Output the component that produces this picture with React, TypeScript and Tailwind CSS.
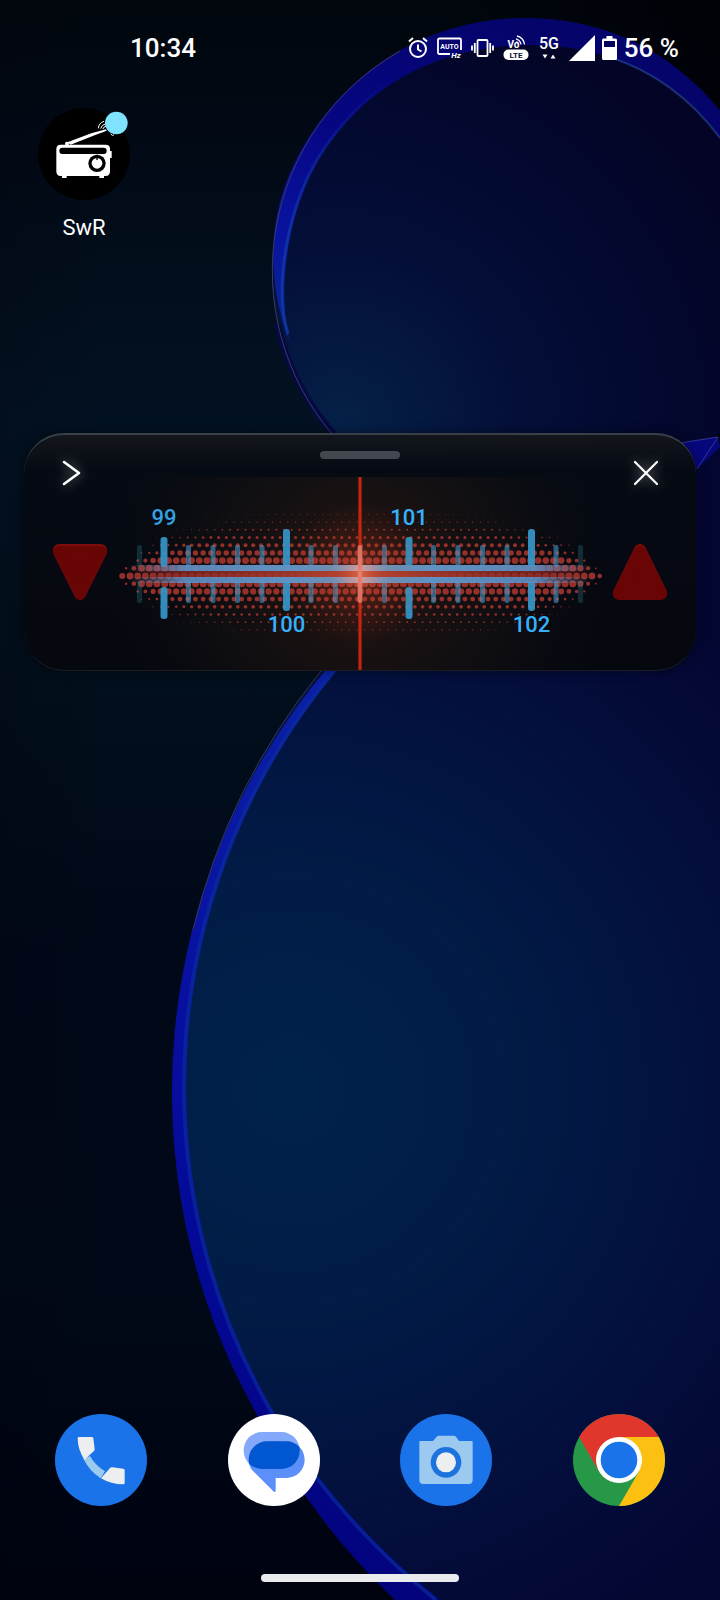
import { useState } from 'react';

const TICK_STEP = 24.5;
const FIRST_TICK = 56;
const DOT_STEP = 7.7;
const NEEDLE_X = 252;

type Dot = { x: number; y: number; r: number };

// Halftone rows: dots shrink away from the centre line and towards both ends
function buildDots(): Dot[] {
  const sizes = [3.4, 3.5, 3.4, 2.7, 2, 1.5, 1, 0.7, 0.5];
  const dots: Dot[] = [];
  for (let k = -8; k <= 7; k++) {
    const y = 99 + k * DOT_STEP;
    const level = Math.min(8, Math.abs(k) + (k > 1 ? 0.35 : 0));
    const low = Math.floor(level);
    const high = Math.min(8, low + 1);
    const base = sizes[low] + (sizes[high] - sizes[low]) * (level - low);
    const inset = 8 + Math.abs(k) * 8;
    const grow = 10 + Math.abs(k) * 14;
    for (let n = -33; n <= 33; n++) {
      const x = NEEDLE_X + 1 + (n + (k % 2 ? 0.5 : 0)) * DOT_STEP;
      const fromEdge = 252 - Math.abs(x - NEEDLE_X) - inset;
      if (fromEdge <= 0) continue;
      const r = base * Math.min(1, 0.25 + fromEdge / grow);
      dots.push({ x, y, r });
    }
  }
  return dots;
}

const dots = buildDots();
const ticks = Array.from({ length: 19 }, (_, i) => i - 1);
const stations = [
  { label: '99', index: 0, top: true },
  { label: '100', index: 5, top: false },
  { label: '101', index: 10, top: true },
  { label: '102', index: 15, top: false },
];

function Wallpaper() {
  return (
    <svg
      className="absolute inset-0 h-full w-full"
      viewBox="0 0 720 1600"
      preserveAspectRatio="xMidYMid slice"
      aria-hidden="true"
    >
      <defs>
        <linearGradient id="sky" x1="0" y1="0" x2="0" y2="1">
          <stop offset="0" stopColor="#01060d" />
          <stop offset="0.12" stopColor="#020b18" />
          <stop offset="0.26" stopColor="#031222" />
          <stop offset="0.42" stopColor="#020f1c" />
          <stop offset="0.6" stopColor="#010818" />
          <stop offset="0.8" stopColor="#010918" />
          <stop offset="1" stopColor="#000210" />
        </linearGradient>
        <linearGradient id="edge" x1="0" y1="0" x2="1" y2="0">
          <stop offset="0" stopColor="#000008" stopOpacity="0.15" />
          <stop offset="0.15" stopColor="#000008" stopOpacity="0" />
          <stop offset="0.6" stopColor="#000006" stopOpacity="0" />
          <stop offset="1" stopColor="#000006" stopOpacity="0.8" />
        </linearGradient>
        <radialGradient id="upper" gradientUnits="userSpaceOnUse" cx="340" cy="430" r="440">
          <stop offset="0" stopColor="#052148" />
          <stop offset="0.4" stopColor="#040f39" />
          <stop offset="0.75" stopColor="#03082e" />
          <stop offset="1" stopColor="#040526" />
        </radialGradient>
        <radialGradient id="lower" gradientUnits="userSpaceOnUse" cx="290" cy="1090" r="620">
          <stop offset="0" stopColor="#00224a" />
          <stop offset="0.35" stopColor="#011c46" />
          <stop offset="0.6" stopColor="#031340" />
          <stop offset="0.8" stopColor="#040c3a" />
          <stop offset="1" stopColor="#040632" />
        </radialGradient>
        <linearGradient id="upperBand" gradientUnits="userSpaceOnUse" x1="520" y1="20" x2="280" y2="340">
          <stop offset="0" stopColor="#04046a" />
          <stop offset="0.5" stopColor="#060683" />
          <stop offset="0.8" stopColor="#0814a0" />
          <stop offset="1" stopColor="#0a2a90" />
        </linearGradient>
        <linearGradient id="lowerBand" gradientUnits="userSpaceOnUse" x1="0" y1="670" x2="0" y2="1600">
          <stop offset="0" stopColor="#0b20a6" />
          <stop offset="0.35" stopColor="#0710a0" />
          <stop offset="0.6" stopColor="#040a98" />
          <stop offset="1" stopColor="#03037c" />
        </linearGradient>
        <linearGradient id="streak" gradientUnits="userSpaceOnUse" x1="395" y1="80" x2="285" y2="250">
          <stop offset="0" stopColor="#1238a8" stopOpacity="0" />
          <stop offset="1" stopColor="#1238a8" stopOpacity="0.8" />
        </linearGradient>
      </defs>
      <rect width="720" height="1600" fill="url(#sky)" />
      <rect width="720" height="1600" fill="url(#edge)" />

      {/* Upper ball */}
      <circle cx="525" cy="271" r="253" fill="url(#upper)" />
      <path d="M277 323 A253 253 0 0 0 340 441" fill="none" stroke="#050b40" strokeWidth="7" />
      <path
        d="M290 343 C266 280 268 218 294 164 C340 70 430 18 525 18 C605 18 672 51 720 111 V137 C680 80 610 45 530 45 C440 45 365 85 320 157 C288 210 276 290 290 343 Z"
        fill="url(#upperBand)"
      />
      <path
        d="M288 334 C274 290 286 212 318 158 C338 126 365 98 395 78"
        fill="none"
        stroke="url(#streak)"
        strokeWidth="3"
      />
      <path d="M610 57 C655 72 692 100 720 138" fill="none" stroke="#2b4b9c" strokeWidth="2" opacity="0.6" />
      <path d="M400 51 A253 253 0 0 0 332 434" fill="none" stroke="#3a3a62" strokeWidth="1" />

      {/* Lower ball */}
      <path
        d="M321 671 C440 520 600 470 720 445 V1600 H425 C360 1550 310 1490 262 1411 A657 657 0 0 1 321 671 Z"
        fill="url(#lower)"
      />
      <path
        d="M325 671 A655 655 0 0 0 255 1411 A680 680 0 0 0 395 1600 H440 A720 720 0 0 1 273 1411 A650 650 0 0 1 336 671 Z"
        fill="url(#lowerBand)"
      />
      <path
        d="M334 671 A650 650 0 0 0 271 1411 A720 720 0 0 0 436 1600"
        fill="none"
        stroke="#0a2c9c"
        strokeWidth="4"
        opacity="0.65"
      />
      <path d="M321 671 A657 657 0 0 0 193 930" fill="none" stroke="#34355c" strokeWidth="1" />
      <path d="M680 443 L718 437 L720 447 L697 469 Z" fill="#07077c" />
      <path d="M680 443 L718 437 L697 469" fill="none" stroke="#33359a" strokeWidth="1" />
    </svg>
  );
}

function StatusBar() {
  return (
    <header className="flex h-24 items-center justify-between pr-[41px] pl-[130px] text-[26px] font-medium">
      <time>10:34</time>
      <div className="flex items-center gap-[9px]">
        <svg width="20" height="22" viewBox="0 0 20 22" fill="none" stroke="currentColor" strokeWidth="2" aria-label="Alarm">
          <circle cx="10" cy="12" r="8" />
          <path d="M10 7.5 V12.5 L13.5 14.5 M1 4.5 L5 1 M19 4.5 L15 1" />
        </svg>
        <svg width="25" height="22" viewBox="0 0 25 22" aria-label="Auto refresh rate">
          <path d="M13 17 H2.5 Q1 17 1 15.5 V3 Q1 1.5 2.5 1.5 H22.5 Q24 1.5 24 3 V13" fill="none" stroke="currentColor" strokeWidth="1.8" />
          <text x="12.5" y="12" textAnchor="middle" fontSize="7" fontWeight="700" fill="currentColor">AUTO</text>
          <text x="19" y="21" textAnchor="middle" fontSize="8" fontWeight="700" fontStyle="italic" fill="currentColor">Hz</text>
        </svg>
        <svg width="23" height="18" viewBox="0 0 23 18" fill="none" stroke="currentColor" strokeWidth="1.8" aria-label="Vibrate">
          <rect x="6.5" y="1" width="10" height="16" rx="1" />
          <path d="M3.8 4 V14 M1 6.5 V11.5 M19.2 4 V14 M22 6.5 V11.5" />
        </svg>
        <svg width="26" height="26" viewBox="0 0 26 26" fill="currentColor" aria-label="VoLTE">
          <text x="10.5" y="13" textAnchor="middle" fontSize="10" fontWeight="700">Vo</text>
          <path d="M13 3.8 A7 7 0 0 1 18 9.5 M14 1 A10 10 0 0 1 21.5 9.5 M13.5 6.5 A4 4 0 0 1 15.5 9" fill="none" stroke="currentColor" strokeWidth="1.3" />
          <rect x="0.5" y="14.5" width="25" height="10.5" rx="5" />
          <text x="13" y="23" textAnchor="middle" fontSize="8" fontWeight="700" fill="#03103a">LTE</text>
        </svg>
        <svg width="22" height="26" viewBox="0 0 22 26" fill="currentColor" aria-label="5G">
          <text x="11" y="14" textAnchor="middle" fontSize="16" fontWeight="500">5G</text>
          <path d="M4.5 19.5 H9.5 L7 23.5 Z M12.5 23.5 H17.5 L15 19.5 Z" />
        </svg>
        <div className="flex items-center gap-[7px]">
          <svg width="26" height="26" viewBox="0 0 26 26" fill="currentColor" aria-label="Signal">
            <path d="M0 26 L26 0 V26 Z" />
          </svg>
          <svg width="15" height="24" viewBox="0 0 15 24" aria-label="Battery">
            <path d="M4.5 0 H10.5 V2.5 H13.5 Q15 2.5 15 4 V22.5 Q15 24 13.5 24 H1.5 Q0 24 0 22.5 V4 Q0 2.5 1.5 2.5 H4.5 Z" fill="currentColor" />
            <rect x="2" y="5" width="11" height="6" fill="#04045c" />
          </svg>
          <span>56 %</span>
        </div>
      </div>
    </header>
  );
}

function RadioIcon() {
  return (
    <svg className="size-23" viewBox="0 0 276 276" aria-hidden="true">
      <circle cx="138" cy="138" r="138" fill="#000" />
      <g fill="#fff">
        <path d="M88 103 L160 76 L204 64 L206 68 L166 83 L98 110 Z" />
        <path d="M68 110 H203 Q216 110 216 122 V129 H221 V150 H216 V190 Q216 204 203 204 H198 V210 H184 V204 H86 V210 H72 V204 H68 Q55 204 55 190 V123 Q55 110 68 110 Z" />
        <circle cx="87" cy="107" r="6" />
      </g>
      <rect x="64" y="119" width="142" height="19" rx="9" fill="#000" />
      <circle cx="177" cy="166" r="26" fill="#000" />
      <circle cx="177" cy="166" r="16" fill="#fff" />
      <path d="M175 140 H179 V154 L177 157 L175 154 Z" fill="#000" />
      <path d="M181 61 A24 24 0 0 1 198 40 M188 62 A18 18 0 0 1 202 48 M195 63 A10 10 0 0 1 204 55 M218 78 Q224 86 228 80" fill="none" stroke="#fff" strokeWidth="3" />
      <circle cx="235" cy="45" r="34" fill="#7fe3ff" />
    </svg>
  );
}

function RadioDial() {
  return (
    <svg className="block h-auto w-full overflow-visible" viewBox="0 0 504 193" role="img" aria-label="FM dial">
      <defs>
        <radialGradient id="warm" gradientUnits="userSpaceOnUse" cx="252" cy="98" r="250">
          <stop offset="0" stopColor="#5a2412" stopOpacity="0.5" />
          <stop offset="0.3" stopColor="#2c1a12" stopOpacity="0.5" />
          <stop offset="0.65" stopColor="#181413" stopOpacity="0.4" />
          <stop offset="1" stopColor="#0d0d12" stopOpacity="0" />
        </radialGradient>
        <radialGradient id="glow" gradientUnits="userSpaceOnUse" cx="252" cy="97" r="70">
          <stop offset="0" stopColor="#ff8a68" stopOpacity="0.5" />
          <stop offset="0.3" stopColor="#e84a24" stopOpacity="0.15" />
          <stop offset="1" stopColor="#b83010" stopOpacity="0" />
        </radialGradient>
        <linearGradient id="rail" gradientUnits="userSpaceOnUse" x1="20" y1="0" x2="484" y2="0">
          <stop offset="0" stopColor="#8a6a88" stopOpacity="0" />
          <stop offset="0.12" stopColor="#5a8fc4" stopOpacity="0.9" />
          <stop offset="0.44" stopColor="#6098c8" />
          <stop offset="0.5" stopColor="#b0b4d0" />
          <stop offset="0.56" stopColor="#6098c8" />
          <stop offset="0.88" stopColor="#5a8fc4" stopOpacity="0.9" />
          <stop offset="1" stopColor="#8a6a88" stopOpacity="0" />
        </linearGradient>
        <linearGradient id="core" gradientUnits="userSpaceOnUse" x1="20" y1="0" x2="484" y2="0">
          <stop offset="0" stopColor="#8c2822" stopOpacity="0" />
          <stop offset="0.12" stopColor="#8c2822" stopOpacity="0.7" />
          <stop offset="0.5" stopColor="#b04434" />
          <stop offset="0.88" stopColor="#8c2822" stopOpacity="0.7" />
          <stop offset="1" stopColor="#8c2822" stopOpacity="0" />
        </linearGradient>
      </defs>
      <rect width="504" height="193" fill="url(#warm)" />
      <g fill="#a3352e" opacity="0.9">
        {dots.map((dot, i) => (
          <circle key={i} cx={dot.x} cy={dot.y} r={dot.r} />
        ))}
      </g>
      <rect x="20" y="93" width="464" height="8" fill="url(#core)" />
      {ticks.map((i) => {
        const x = FIRST_TICK + i * TICK_STEP;
        if (i % 5 === 0) {
          const odd = i % 10 === 0;
          return (
            <g key={i} fill="#3596ca" opacity="0.92">
              <rect x={x - 3.5} y={odd ? 60 : 52} width="7" height={odd ? 30 : 38} rx="3" />
              <rect x={x - 3.5} y={odd ? 110 : 104} width="7" height={odd ? 32 : 30} rx="3" />
            </g>
          );
        }
        const outer = i < 0 || i > 16;
        return (
          <g key={i} fill={outer ? '#2a7f8c' : i === 8 ? '#e0a0a8' : '#4a94c4'} opacity={outer ? 0.3 : 0.6}>
            <rect x={x - 2.5} y="68" width="5" height="22" rx="2" />
            <rect x={x - 2.5} y="104" width="5" height="22" rx="2" />
          </g>
        );
      })}
      <rect x="20" y="88" width="464" height="6" fill="url(#rail)" />
      <rect x="20" y="100" width="464" height="6" fill="url(#rail)" />
      {stations.map((station) => (
        <text
          key={station.label}
          x={FIRST_TICK + station.index * TICK_STEP}
          y={station.top ? 48 : 155}
          textAnchor="middle"
          fontSize="22"
          fontWeight="500"
          fill={station.index === 0 ? '#34a2e2' : '#36b0fb'}
        >
          {station.label}
        </text>
      ))}
      <rect x="250" width="4" height="193" fill="#b4200e" opacity="0.7" />
      <rect x="251" width="2" height="193" fill="#d42c14" opacity="0.7" />
      <circle cx="252" cy="97" r="70" fill="url(#glow)" />
      <rect x="250" y="68" width="4" height="58" rx="2" fill="#f09a88" opacity="0.6" />
    </svg>
  );
}

function RadioWidget({ onClose }: { onClose: () => void }) {
  return (
    <section
      aria-label="Radio"
      className="mx-6 flex overflow-hidden rounded-[40px] border-t-2 border-b border-t-[#3a3f47] border-b-[#1d1c20] bg-linear-to-b from-[#14161c]/98 via-[#060a12]/98 via-15% to-[#06080f]/98 px-7 shadow-[0_0_12px_rgba(0,0,0,0.4)]"
    >
      <div className="flex w-14 shrink-0 flex-col items-start gap-[52px] pt-5">
        <button type="button" aria-label="Expand" className="flex size-9 items-center justify-center">
          <svg
            className="size-9 overflow-visible drop-shadow-[0_0_6px_rgba(255,255,255,0.5)]"
            viewBox="0 0 36 36"
            fill="none"
            stroke="#fff"
            strokeWidth="2.6"
            strokeLinecap="round"
            strokeLinejoin="round"
          >
            <path d="M12 7 L27 18 L12 29" />
          </svg>
        </button>
        <button type="button" aria-label="Tune down">
          <svg className="h-[58px] w-14 overflow-visible" viewBox="0 0 56 58" strokeLinejoin="round" strokeWidth="12">
            <path d="M7 7 H49 L28 50 Z" fill="#7d0c0c" stroke="#7d0c0c" />
            <path d="M7 9 H49 L28 51 Z" fill="#680505" stroke="#680505" />
          </svg>
        </button>
      </div>
      <div className="flex min-w-0 flex-1 flex-col items-center">
        <div className="flex h-[42px] items-start pt-4">
          <div className="h-2 w-20 rounded-full bg-[#43474f]" />
        </div>
        <RadioDial />
      </div>
      <div className="flex w-14 shrink-0 flex-col items-end gap-[52px] pt-5">
        <button type="button" aria-label="Close" onClick={onClose} className="flex h-9 w-11 items-center justify-center">
          <svg
            className="size-9 overflow-visible drop-shadow-[0_0_6px_rgba(255,255,255,0.5)]"
            viewBox="0 0 36 36"
            fill="none"
            stroke="#fff"
            strokeWidth="2.2"
            strokeLinecap="round"
          >
            <path d="M7 7 L29 29 M29 7 L7 29" />
          </svg>
        </button>
        <button type="button" aria-label="Tune up">
          <svg className="h-[58px] w-14 overflow-visible" viewBox="0 0 56 58" strokeLinejoin="round" strokeWidth="12">
            <path d="M7 50 H49 L28 7 Z" fill="#7a0a0a" stroke="#7a0a0a" />
            <path d="M7 51 H49 L28 9 Z" fill="#6a0506" stroke="#6a0506" />
          </svg>
        </button>
      </div>
    </section>
  );
}

function PhoneIcon() {
  return (
    <svg className="size-23" viewBox="0 0 276 276" aria-hidden="true">
      <circle cx="138" cy="138" r="138" fill="#1a73e8" />
      <path d="M86 136 L105 126 Q120 154 150 172 L137 193 Q104 172 86 136 Z" fill="#9dcbf0" />
      <path d="M72 69 H110 Q114 69 115 73 L119 106 Q119 110 116 112 L88 138 Q68 105 68 73 Q68 69 72 69 Z" fill="#eceef0" />
      <path d="M138 193 L165 162 Q168 159 172 160 L205 164 Q209 165 209 169 V207 Q209 211 205 211 Q168 211 138 193 Z" fill="#eceef0" />
    </svg>
  );
}

function MessagesIcon() {
  return (
    <svg className="size-23" viewBox="0 0 276 276" aria-hidden="true">
      <defs>
        <clipPath id="bubbleBack">
          <rect x="47" y="54" width="168" height="111" rx="55" />
        </clipPath>
      </defs>
      <circle cx="138" cy="138" r="138" fill="#fff" />
      <rect x="47" y="54" width="168" height="111" rx="55" fill="#84a8fa" />
      <path d="M117 82 H175 A55 55 0 0 1 175 192 H143 V230 Q142 237 136 232 L72 168 Q62 155 62 137 A55 55 0 0 1 117 82 Z" fill="#5c8ffa" />
      <path d="M117 82 H175 A55 55 0 0 1 175 192 H143 L72 168 Q62 155 62 137 A55 55 0 0 1 117 82 Z" fill="#0057d0" clipPath="url(#bubbleBack)" />
    </svg>
  );
}

function CameraIcon() {
  return (
    <svg className="size-23" viewBox="0 0 276 276" aria-hidden="true">
      <circle cx="138" cy="138" r="138" fill="#1a73e8" />
      <path d="M61 81 H99 L110 68 Q113 65 117 65 H161 Q165 65 168 68 L177 81 H215 Q218 81 218 84 V198 Q218 210 206 210 H70 Q58 210 58 198 V84 Q58 81 61 81 Z" fill="#9bc9ef" />
      <circle cx="138" cy="145" r="46" fill="#1d73dd" />
      <circle cx="138" cy="145" r="30" fill="#eceef0" />
    </svg>
  );
}

function ChromeIcon() {
  return (
    <svg className="size-23" viewBox="0 0 276 276" aria-hidden="true">
      <circle cx="138" cy="138" r="138" fill="#279847" />
      <path d="M18.5 69 A138 138 0 0 1 257.5 69 L138 138 L78 172.5 Z" fill="#e0362b" />
      <path d="M138 69 H257.5 A138 138 0 0 1 138 276 L198 172.5 Z" fill="#fcc013" />
      <circle cx="138" cy="138" r="69" fill="#fff" />
      <circle cx="138" cy="138" r="55" fill="#1a73e8" />
    </svg>
  );
}

const dockApps = [
  { name: 'Phone', Icon: PhoneIcon },
  { name: 'Messages', Icon: MessagesIcon },
  { name: 'Camera', Icon: CameraIcon },
  { name: 'Chrome', Icon: ChromeIcon },
];

export default function App() {
  const [widgetOpen, setWidgetOpen] = useState(true);

  return (
    <div className="relative min-h-screen overflow-hidden bg-[#01050e] font-['Roboto',sans-serif] text-white">
      <Wallpaper />
      <div className="relative flex min-h-screen flex-col">
        <StatusBar />

        {/* Home screen */}
        <main className="flex flex-col gap-[189px]">
          <div className="px-[38px] pt-3">
            <button type="button" className="flex flex-col items-center gap-3" onClick={() => setWidgetOpen(true)}>
              <RadioIcon />
              <span className="text-[22px] leading-8">SwR</span>
            </button>
          </div>
          {widgetOpen && <RadioWidget onClose={() => setWidgetOpen(false)} />}
        </main>

        {/* Dock */}
        <nav className="mt-auto flex justify-between px-[55px]" aria-label="Dock">
          {dockApps.map(({ name, Icon }) => (
            <button key={name} type="button" aria-label={name}>
              <Icon />
            </button>
          ))}
        </nav>
        <div className="mt-[68px] mb-[18px] h-2 w-[198px] self-center rounded-full bg-[#e9ebee]" />
      </div>
    </div>
  );
}
